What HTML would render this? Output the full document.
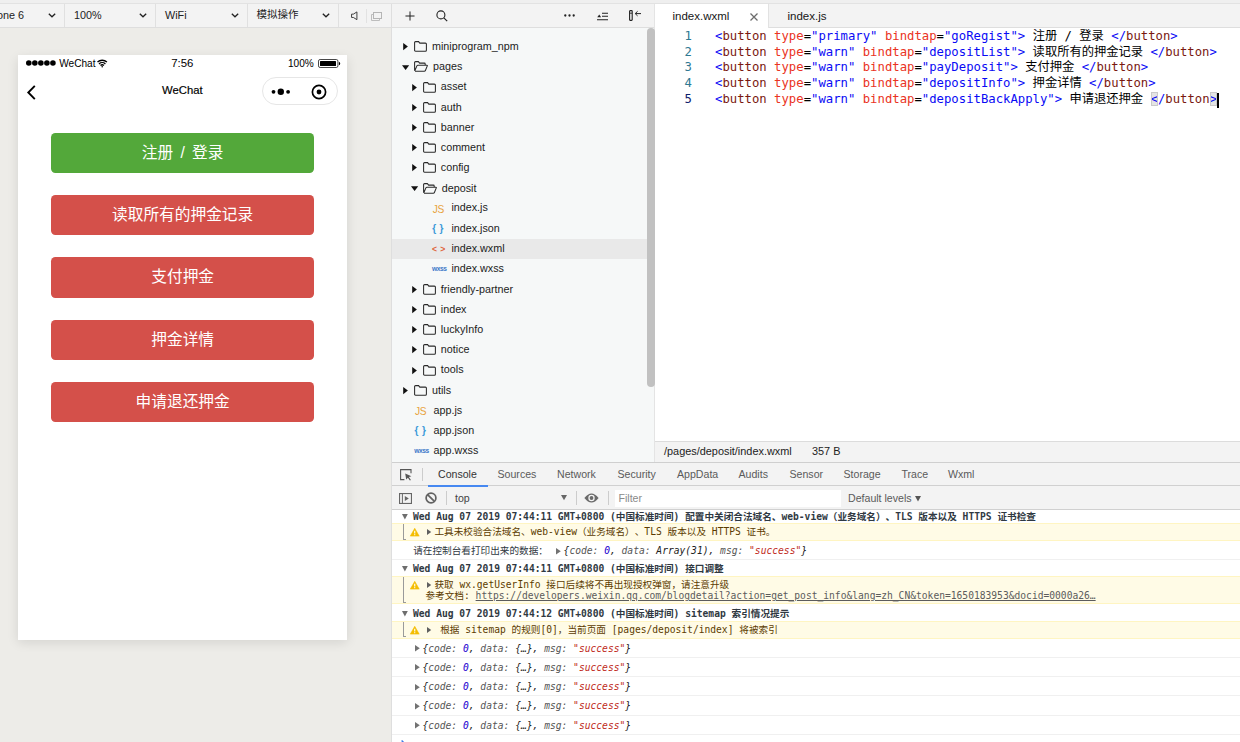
<!DOCTYPE html>
<html lang="zh-CN">
<head>
<meta charset="utf-8">
<title>WeChat DevTools</title>
<style>
*{box-sizing:border-box;margin:0;padding:0;text-spacing-trim:space-all}
html,body{width:1240px;height:742px;overflow:hidden;background:#fff}
body{position:relative;font-family:"Liberation Sans","Noto Sans CJK SC",sans-serif;font-size:10.6px;color:#333;-webkit-font-smoothing:antialiased}
.abs{position:absolute}
.t{position:absolute;white-space:nowrap;line-height:1}
svg{position:absolute;overflow:visible}
/* top strip */
#topstrip{left:0;top:0;width:1240px;height:4px;background:#efefef;border-bottom:1px solid #e2e2e2}
/* simulator */
#sim{left:0;top:4px;width:391px;height:738px;background:#edece8}
#simbar{left:0;top:0;width:391px;height:24px;background:#f3f3f3;border-bottom:1px solid #dedede}
.vsep{position:absolute;top:0;width:1px;height:23px;background:#e0e0e0}
#vline1{left:391px;top:4px;width:1px;height:738px;background:#dedede}
/* phone */
#phone{left:17.6px;top:54.5px;width:329.2px;height:585.5px;background:#fff;box-shadow:0 2.5px 11px rgba(0,0,0,.11)}
.btn{word-spacing:2.9px;position:absolute;left:33.3px;width:263.5px;height:40.4px;border-radius:4.4px;color:#fff;font-size:15.7px;line-height:40.4px;text-align:center;font-family:"Liberation Sans","Noto Sans CJK SC",sans-serif}
.btn.g{background:#53a83a}
.btn.r{background:#d4504a}
/* file tree */
#tree{left:392px;top:4px;width:263px;height:458px;background:#f6f8f8}
#treebar{left:0;top:0;width:262px;height:24px;background:#f3f3f3;border-bottom:1px solid #dedede}
.row{position:absolute;left:0;width:255px;height:20.2px}
.row .t{top:4.6px;font-size:10.6px;color:#1c1c1c}
#vline2{left:654px;top:4px;width:1px;height:458px;background:#e4e4e4;z-index:1}
/* editor */
#ed{left:655px;top:4px;width:585px;height:458px;background:#fff}
#tabs{left:0;top:0;width:585px;height:24px;background:#f3f3f3;border-bottom:1px solid #dedede}
#tab1{left:0;top:0;width:114px;height:24px;background:#fff;border-right:1px solid #e2e2e2}
.code{position:absolute;left:0;width:585px;height:15.8px;font-family:"DejaVu Sans Mono","Liberation Mono","Noto Sans CJK SC",monospace;font-size:12.28px;line-height:15.8px;white-space:pre;color:#000}
.code .n{position:absolute;left:0;width:37px;text-align:right;color:#2e7892}
.code .c{position:absolute;left:60px}
.b{color:#0a0af5}.m{color:#7a1810}.a{color:#ea3323}
.bm{background:#e4e4e4;outline:1px solid #c9c9c9;outline-offset:-1px}
.cursor{display:inline-block;width:2px;height:15px;background:#000;vertical-align:top;margin-top:0.5px}
.cj{font-family:"Noto Sans CJK SC",sans-serif;line-height:0}
#status{left:0;top:437px;width:585px;height:21px;background:#f3f3f3;border-top:1px solid #dcdcdc}
/* console */
#con{left:392px;top:462px;width:848px;height:280px;background:#fff;border-top:1px solid #cfcfcf}
#ctabs{left:0;top:0;width:848px;height:23px;background:#f3f3f3;border-bottom:1px solid #d0d0d0}
#ctool{left:0;top:23px;width:848px;height:24px;background:#f3f3f3;border-bottom:1px solid #d0d0d0}
.ct{position:absolute;top:6px;font-size:10.6px;color:#5a5a5a;line-height:1;white-space:nowrap}
.msg{position:absolute;left:0;width:848px;font-family:"DejaVu Sans Mono","Liberation Mono","Noto Sans CJK SC",monospace;font-size:9.65px;white-space:pre;color:#303942}
.msg .t{font-size:9.65px;white-space:pre}
.warn{background:#fffbe6;border-top:1px solid #fff5c2;border-bottom:1px solid #fff5c2;color:#5c3c00}
.hd{font-weight:bold;color:#303942}
.obj{font-style:italic;color:#565656;border-bottom:1px solid #f0f0f0}
.obj .k{color:#565656}.obj .num{color:#1c00cf}.obj .s{color:#c02a22}.obj .d{color:#222}
</style>
</head>
<body>
<div class="abs" id="topstrip"></div>

<!-- ============ SIMULATOR ============ -->
<div class="abs" id="sim">
  <div class="abs" id="simbar">
    <span class="t" style="left:-18.6px;top:5.8px;font-size:10.8px;color:#222">iPhone 6</span>
    <svg style="left:48px;top:9px" width="8" height="5" viewBox="0 0 8 5"><path d="M0.8 0.8 L4 3.8 L7.2 0.8" fill="none" stroke="#222" stroke-width="1.3"/></svg>
    <div class="vsep" style="left:64px"></div>
    <span class="t" style="left:74px;top:5.8px;font-size:10.8px;color:#222">100%</span>
    <svg style="left:139px;top:9px" width="8" height="5" viewBox="0 0 8 5"><path d="M0.8 0.8 L4 3.8 L7.2 0.8" fill="none" stroke="#222" stroke-width="1.3"/></svg>
    <div class="vsep" style="left:155px"></div>
    <span class="t" style="left:165px;top:5.8px;font-size:10.8px;color:#222">WiFi</span>
    <svg style="left:230.5px;top:9px" width="8" height="5" viewBox="0 0 8 5"><path d="M0.8 0.8 L4 3.8 L7.2 0.8" fill="none" stroke="#222" stroke-width="1.3"/></svg>
    <div class="vsep" style="left:247px"></div>
    <span class="t" style="left:256.5px;top:5.3px;font-size:10.5px;color:#222">模拟操作</span>
    <svg style="left:322px;top:9px" width="8" height="5" viewBox="0 0 8 5"><path d="M0.8 0.8 L4 3.8 L7.2 0.8" fill="none" stroke="#222" stroke-width="1.3"/></svg>
    <div class="vsep" style="left:338px"></div>
    <svg style="left:350.8px;top:7.2px" width="7.4" height="9.6" viewBox="0 0 8 10"><path d="M0.6 3.2 H2.6 L6.4 0.8 V9.2 L2.6 6.8 H0.6 Z" fill="none" stroke="#333" stroke-width="1"/></svg>
    <div class="abs" style="left:366px;top:5px;width:1px;height:14px;background:#e2e2e2"></div>
    <svg style="left:371px;top:8px" width="11" height="9" viewBox="0 0 11 9"><path d="M2.5 2.5 H0.5 V8.5 H8.5 V6.5" fill="none" stroke="#bdbdbd" stroke-width="1"/><rect x="2.5" y="0.5" width="8" height="6" fill="none" stroke="#b5b5b5" stroke-width="1"/></svg>
  </div>
</div>
<div class="abs" id="vline1"></div>

<!-- phone -->
<div class="abs" id="phone">
  <!-- status bar -->
  <svg style="left:8.7px;top:5.4px" width="30" height="6" viewBox="0 0 30 6"><g fill="#000"><circle cx="2.8" cy="3" r="2.8"/><circle cx="8.83" cy="3" r="2.8"/><circle cx="14.86" cy="3" r="2.8"/><circle cx="20.89" cy="3" r="2.8"/><circle cx="26.92" cy="3" r="2.8"/></g></svg>
  <span class="t" style="left:41.6px;top:4.7px;font-size:10.1px;color:#000">WeChat</span>
  <svg style="left:79.2px;top:4.3px" width="10.4" height="8.6" viewBox="0 0 10.4 8.6"><g fill="none" stroke="#000" stroke-width="1.35"><path d="M0.5 3.1 A6.8 6.8 0 0 1 9.9 3.1"/><path d="M2.0 4.9 A4.6 4.6 0 0 1 8.4 4.9"/><path d="M3.5 6.6 A2.5 2.5 0 0 1 6.9 6.6"/></g><circle cx="5.2" cy="7.7" r="0.8" fill="#000"/></svg>
  <span class="t" style="left:153.6px;top:3.7px;font-size:11.4px;color:#000">7:56</span>
  <span class="t" style="left:270.4px;top:4.7px;font-size:10.1px;color:#000">100%</span>
  <svg style="left:300.2px;top:4.3px" width="23" height="9" viewBox="0 0 23 9"><rect x="0.5" y="0.5" width="19.4" height="8" rx="1.6" fill="none" stroke="#333" stroke-width="0.9"/><rect x="2" y="2" width="16" height="5" rx="0.5" fill="#000"/><path d="M20.9 2.7 A1.9 1.9 0 0 1 20.9 6.3 Z" fill="#000"/></svg>
  <!-- nav bar -->
  <svg style="left:9px;top:30.2px" width="9" height="15" viewBox="0 0 9 15"><path d="M7.8 0.9 L1.3 7.5 L7.8 14.1" fill="none" stroke="#000" stroke-width="1.9"/></svg>
  <span class="t" style="left:144.4px;top:30.6px;font-size:11.3px;color:#000;-webkit-text-stroke:0.18px #000">WeChat</span>
  <div class="abs" style="left:244.4px;top:22.6px;width:75.7px;height:28.4px;border:1px solid #e6e6e6;border-radius:15px;background:#fff"></div>
  <svg style="left:252.6px;top:32.5px" width="22" height="8" viewBox="0 0 22 8"><g fill="#000"><circle cx="3.5" cy="4.8" r="1.9"/><circle cx="10.8" cy="4.8" r="3.2"/><circle cx="18.1" cy="4.8" r="1.9"/></g></svg>
  <svg style="left:293.4px;top:29.2px" width="16" height="16" viewBox="0 0 16 16"><circle cx="8" cy="8" r="6.6" fill="none" stroke="#000" stroke-width="1.7"/><circle cx="8" cy="8" r="2.4" fill="#000"/></svg>
  <!-- buttons -->
  <div class="btn g" style="top:78.1px">注册 / 登录</div>
  <div class="btn r" style="top:140.45px">读取所有的押金记录</div>
  <div class="btn r" style="top:202.8px">支付押金</div>
  <div class="btn r" style="top:265.15px">押金详情</div>
  <div class="btn r" style="top:327.5px">申请退还押金</div>
</div>

<!-- ============ FILE TREE ============ -->
<div class="abs" id="tree">
  <div class="abs" id="treebar"></div>
  <!--TREE-->
<svg style="left:12.6px;top:6.9px" width="10" height="10" viewBox="0 0 11 11"><path d="M5.5 0.5 V10.5 M0.5 5.5 H10.5" stroke="#222" stroke-width="1.1" fill="none"/></svg>
<svg style="left:44px;top:6px" width="12" height="12" viewBox="0 0 12 12"><circle cx="4.9" cy="4.9" r="4" fill="none" stroke="#222" stroke-width="1.1"/><path d="M7.8 7.8 L11.2 11.2" stroke="#222" stroke-width="1.2"/></svg>
<svg style="left:172.3px;top:9.8px" width="11" height="3" viewBox="0 0 11 3"><g fill="#222"><circle cx="1.3" cy="1.5" r="1.15"/><circle cx="5.5" cy="1.5" r="1.15"/><circle cx="9.7" cy="1.5" r="1.15"/></g></svg>
<svg style="left:205px;top:7.5px" width="11" height="9" viewBox="0 0 11 9"><path d="M5 1.2 H11 M5 4.2 H11 M0 7.8 H11" stroke="#222" stroke-width="1.1" fill="none"/><path d="M0.3 5.2 L2.2 2.6 L4.1 5.2 Z" fill="#222"/></svg>
<svg style="left:237px;top:5.6px" width="13" height="11" viewBox="0 0 13 11"><rect x="0.6" y="0.6" width="2.6" height="9.8" rx="0.6" fill="none" stroke="#222" stroke-width="1.1"/><path d="M0.6 3.2 H3.2" stroke="#222" stroke-width="0.9"/><path d="M12 3.6 H6.4 M8.6 1.3 L6.2 3.6 L8.6 5.9" stroke="#222" stroke-width="1" fill="none"/></svg>
<div class="row" style="top:32.65px"><svg style="left:11.00px;top:6.51px" width="5" height="7.2" viewBox="0 0 5 7.2"><path d="M0.2 0 L4.9 3.6 L0.2 7.2 Z" fill="#111"/></svg><svg style="left:22.30px;top:4.51px" width="13" height="11" viewBox="0 0 13 11"><path d="M0.6 9.2 V1.6 Q0.6 0.6 1.6 0.6 H4.6 L5.8 2.1 H11.4 Q12.4 2.1 12.4 3.1 V9.2 Q12.4 10.2 11.4 10.2 H1.6 Q0.6 10.2 0.6 9.2 Z" fill="none" stroke="#2a2a2a" stroke-width="1.05"/></svg><span class="t" style="left:40.0px;top:4.39px;font-size:10.75px">miniprogram_npm</span></div>
<div class="row" style="top:52.86px"><svg style="left:9.90px;top:7.81px" width="7.2" height="5" viewBox="0 0 7.2 5"><path d="M0 0.2 L7.2 0.2 L3.6 4.9 Z" fill="#111"/></svg><svg style="left:22.30px;top:4.51px" width="14" height="11" viewBox="0 0 14 11"><path d="M0.6 9.6 V1.6 Q0.6 0.6 1.6 0.6 H4.4 L5.6 2.1 H10.4 Q11.2 2.1 11.2 3 V4.2 M0.7 10 L2.9 4.9 Q3.2 4.2 4 4.2 H13 Q13.6 4.2 13.3 4.9 L11.4 9.5 Q11.1 10.2 10.3 10.2 H1 " fill="none" stroke="#2a2a2a" stroke-width="1.05" stroke-linejoin="round"/></svg><span class="t" style="left:41.0px;top:4.39px;font-size:10.75px">pages</span></div>
<div class="row" style="top:73.08px"><svg style="left:19.80px;top:6.51px" width="5" height="7.2" viewBox="0 0 5 7.2"><path d="M0.2 0 L4.9 3.6 L0.2 7.2 Z" fill="#111"/></svg><svg style="left:31.20px;top:4.51px" width="13" height="11" viewBox="0 0 13 11"><path d="M0.6 9.2 V1.6 Q0.6 0.6 1.6 0.6 H4.6 L5.8 2.1 H11.4 Q12.4 2.1 12.4 3.1 V9.2 Q12.4 10.2 11.4 10.2 H1.6 Q0.6 10.2 0.6 9.2 Z" fill="none" stroke="#2a2a2a" stroke-width="1.05"/></svg><span class="t" style="left:48.8px;top:4.39px;font-size:10.75px">asset</span></div>
<div class="row" style="top:93.29px"><svg style="left:19.80px;top:6.51px" width="5" height="7.2" viewBox="0 0 5 7.2"><path d="M0.2 0 L4.9 3.6 L0.2 7.2 Z" fill="#111"/></svg><svg style="left:31.20px;top:4.51px" width="13" height="11" viewBox="0 0 13 11"><path d="M0.6 9.2 V1.6 Q0.6 0.6 1.6 0.6 H4.6 L5.8 2.1 H11.4 Q12.4 2.1 12.4 3.1 V9.2 Q12.4 10.2 11.4 10.2 H1.6 Q0.6 10.2 0.6 9.2 Z" fill="none" stroke="#2a2a2a" stroke-width="1.05"/></svg><span class="t" style="left:48.8px;top:4.39px;font-size:10.75px">auth</span></div>
<div class="row" style="top:113.51px"><svg style="left:19.80px;top:6.51px" width="5" height="7.2" viewBox="0 0 5 7.2"><path d="M0.2 0 L4.9 3.6 L0.2 7.2 Z" fill="#111"/></svg><svg style="left:31.20px;top:4.51px" width="13" height="11" viewBox="0 0 13 11"><path d="M0.6 9.2 V1.6 Q0.6 0.6 1.6 0.6 H4.6 L5.8 2.1 H11.4 Q12.4 2.1 12.4 3.1 V9.2 Q12.4 10.2 11.4 10.2 H1.6 Q0.6 10.2 0.6 9.2 Z" fill="none" stroke="#2a2a2a" stroke-width="1.05"/></svg><span class="t" style="left:48.8px;top:4.39px;font-size:10.75px">banner</span></div>
<div class="row" style="top:133.72px"><svg style="left:19.80px;top:6.51px" width="5" height="7.2" viewBox="0 0 5 7.2"><path d="M0.2 0 L4.9 3.6 L0.2 7.2 Z" fill="#111"/></svg><svg style="left:31.20px;top:4.51px" width="13" height="11" viewBox="0 0 13 11"><path d="M0.6 9.2 V1.6 Q0.6 0.6 1.6 0.6 H4.6 L5.8 2.1 H11.4 Q12.4 2.1 12.4 3.1 V9.2 Q12.4 10.2 11.4 10.2 H1.6 Q0.6 10.2 0.6 9.2 Z" fill="none" stroke="#2a2a2a" stroke-width="1.05"/></svg><span class="t" style="left:48.8px;top:4.39px;font-size:10.75px">comment</span></div>
<div class="row" style="top:153.94px"><svg style="left:19.80px;top:6.51px" width="5" height="7.2" viewBox="0 0 5 7.2"><path d="M0.2 0 L4.9 3.6 L0.2 7.2 Z" fill="#111"/></svg><svg style="left:31.20px;top:4.51px" width="13" height="11" viewBox="0 0 13 11"><path d="M0.6 9.2 V1.6 Q0.6 0.6 1.6 0.6 H4.6 L5.8 2.1 H11.4 Q12.4 2.1 12.4 3.1 V9.2 Q12.4 10.2 11.4 10.2 H1.6 Q0.6 10.2 0.6 9.2 Z" fill="none" stroke="#2a2a2a" stroke-width="1.05"/></svg><span class="t" style="left:48.8px;top:4.39px;font-size:10.75px">config</span></div>
<div class="row" style="top:174.16px"><svg style="left:18.70px;top:7.81px" width="7.2" height="5" viewBox="0 0 7.2 5"><path d="M0 0.2 L7.2 0.2 L3.6 4.9 Z" fill="#111"/></svg><svg style="left:31.20px;top:4.51px" width="14" height="11" viewBox="0 0 14 11"><path d="M0.6 9.6 V1.6 Q0.6 0.6 1.6 0.6 H4.4 L5.6 2.1 H10.4 Q11.2 2.1 11.2 3 V4.2 M0.7 10 L2.9 4.9 Q3.2 4.2 4 4.2 H13 Q13.6 4.2 13.3 4.9 L11.4 9.5 Q11.1 10.2 10.3 10.2 H1 " fill="none" stroke="#2a2a2a" stroke-width="1.05" stroke-linejoin="round"/></svg><span class="t" style="left:49.8px;top:4.39px;font-size:10.75px">deposit</span></div>
<div class="row" style="top:194.37px"><span class="t" style="left:40.70px;top:6.21px;font-size:10.2px;color:#e8a33d;font-family:'Liberation Sans',sans-serif;letter-spacing:-0.4px">JS</span><span class="t" style="left:59.4px;top:4.09px;font-size:10.75px">index.js</span></div>
<div class="row" style="top:214.59px"><span class="t" style="left:40.30px;top:5.31px;font-size:10px;color:#3b9ad9;font-family:'Liberation Sans',sans-serif;font-weight:bold;letter-spacing:3.4px">{}</span><span class="t" style="left:59.4px;top:4.09px;font-size:10.75px">index.json</span></div>
<div class="row" style="top:234.80px;background:#e9e9e9"><span class="t" style="left:40.00px;top:6.11px;font-size:8.6px;color:#e0643a;font-family:'Liberation Sans',sans-serif;font-weight:bold;letter-spacing:3.2px">&lt;&gt;</span><span class="t" style="left:59.4px;top:4.09px;font-size:10.75px">index.wxml</span></div>
<div class="row" style="top:255.02px"><span class="t" style="left:40.00px;top:6.81px;font-size:6.7px;color:#3f78c9;font-family:'Liberation Sans',sans-serif;font-weight:bold;letter-spacing:-0.45px">wxss</span><span class="t" style="left:59.4px;top:4.09px;font-size:10.75px">index.wxss</span></div>
<div class="row" style="top:275.23px"><svg style="left:19.80px;top:6.51px" width="5" height="7.2" viewBox="0 0 5 7.2"><path d="M0.2 0 L4.9 3.6 L0.2 7.2 Z" fill="#111"/></svg><svg style="left:31.20px;top:4.51px" width="13" height="11" viewBox="0 0 13 11"><path d="M0.6 9.2 V1.6 Q0.6 0.6 1.6 0.6 H4.6 L5.8 2.1 H11.4 Q12.4 2.1 12.4 3.1 V9.2 Q12.4 10.2 11.4 10.2 H1.6 Q0.6 10.2 0.6 9.2 Z" fill="none" stroke="#2a2a2a" stroke-width="1.05"/></svg><span class="t" style="left:48.8px;top:4.39px;font-size:10.75px">friendly-partner</span></div>
<div class="row" style="top:295.44px"><svg style="left:19.80px;top:6.51px" width="5" height="7.2" viewBox="0 0 5 7.2"><path d="M0.2 0 L4.9 3.6 L0.2 7.2 Z" fill="#111"/></svg><svg style="left:31.20px;top:4.51px" width="13" height="11" viewBox="0 0 13 11"><path d="M0.6 9.2 V1.6 Q0.6 0.6 1.6 0.6 H4.6 L5.8 2.1 H11.4 Q12.4 2.1 12.4 3.1 V9.2 Q12.4 10.2 11.4 10.2 H1.6 Q0.6 10.2 0.6 9.2 Z" fill="none" stroke="#2a2a2a" stroke-width="1.05"/></svg><span class="t" style="left:48.8px;top:4.39px;font-size:10.75px">index</span></div>
<div class="row" style="top:315.66px"><svg style="left:19.80px;top:6.51px" width="5" height="7.2" viewBox="0 0 5 7.2"><path d="M0.2 0 L4.9 3.6 L0.2 7.2 Z" fill="#111"/></svg><svg style="left:31.20px;top:4.51px" width="13" height="11" viewBox="0 0 13 11"><path d="M0.6 9.2 V1.6 Q0.6 0.6 1.6 0.6 H4.6 L5.8 2.1 H11.4 Q12.4 2.1 12.4 3.1 V9.2 Q12.4 10.2 11.4 10.2 H1.6 Q0.6 10.2 0.6 9.2 Z" fill="none" stroke="#2a2a2a" stroke-width="1.05"/></svg><span class="t" style="left:48.8px;top:4.39px;font-size:10.75px">luckyInfo</span></div>
<div class="row" style="top:335.88px"><svg style="left:19.80px;top:6.51px" width="5" height="7.2" viewBox="0 0 5 7.2"><path d="M0.2 0 L4.9 3.6 L0.2 7.2 Z" fill="#111"/></svg><svg style="left:31.20px;top:4.51px" width="13" height="11" viewBox="0 0 13 11"><path d="M0.6 9.2 V1.6 Q0.6 0.6 1.6 0.6 H4.6 L5.8 2.1 H11.4 Q12.4 2.1 12.4 3.1 V9.2 Q12.4 10.2 11.4 10.2 H1.6 Q0.6 10.2 0.6 9.2 Z" fill="none" stroke="#2a2a2a" stroke-width="1.05"/></svg><span class="t" style="left:48.8px;top:4.39px;font-size:10.75px">notice</span></div>
<div class="row" style="top:356.09px"><svg style="left:19.80px;top:6.51px" width="5" height="7.2" viewBox="0 0 5 7.2"><path d="M0.2 0 L4.9 3.6 L0.2 7.2 Z" fill="#111"/></svg><svg style="left:31.20px;top:4.51px" width="13" height="11" viewBox="0 0 13 11"><path d="M0.6 9.2 V1.6 Q0.6 0.6 1.6 0.6 H4.6 L5.8 2.1 H11.4 Q12.4 2.1 12.4 3.1 V9.2 Q12.4 10.2 11.4 10.2 H1.6 Q0.6 10.2 0.6 9.2 Z" fill="none" stroke="#2a2a2a" stroke-width="1.05"/></svg><span class="t" style="left:48.8px;top:4.39px;font-size:10.75px">tools</span></div>
<div class="row" style="top:376.30px"><svg style="left:11.00px;top:6.51px" width="5" height="7.2" viewBox="0 0 5 7.2"><path d="M0.2 0 L4.9 3.6 L0.2 7.2 Z" fill="#111"/></svg><svg style="left:22.30px;top:4.51px" width="13" height="11" viewBox="0 0 13 11"><path d="M0.6 9.2 V1.6 Q0.6 0.6 1.6 0.6 H4.6 L5.8 2.1 H11.4 Q12.4 2.1 12.4 3.1 V9.2 Q12.4 10.2 11.4 10.2 H1.6 Q0.6 10.2 0.6 9.2 Z" fill="none" stroke="#2a2a2a" stroke-width="1.05"/></svg><span class="t" style="left:40.0px;top:4.39px;font-size:10.75px">utils</span></div>
<div class="row" style="top:396.52px"><span class="t" style="left:23.00px;top:6.21px;font-size:10.2px;color:#e8a33d;font-family:'Liberation Sans',sans-serif;letter-spacing:-0.4px">JS</span><span class="t" style="left:41.5px;top:4.09px;font-size:10.75px">app.js</span></div>
<div class="row" style="top:416.73px"><span class="t" style="left:22.60px;top:5.31px;font-size:10px;color:#3b9ad9;font-family:'Liberation Sans',sans-serif;font-weight:bold;letter-spacing:3.4px">{}</span><span class="t" style="left:41.5px;top:4.09px;font-size:10.75px">app.json</span></div>
<div class="row" style="top:436.95px"><span class="t" style="left:22.30px;top:6.81px;font-size:6.7px;color:#3f78c9;font-family:'Liberation Sans',sans-serif;font-weight:bold;letter-spacing:-0.45px">wxss</span><span class="t" style="left:41.5px;top:4.09px;font-size:10.75px">app.wxss</span></div>
<div class="abs" style="left:255px;top:23.7px;width:7.9px;height:359.5px;background:#c1c1c1;border-radius:4px;z-index:3"></div>
<!--/TREE-->
</div>
<div class="abs" id="vline2"></div>

<!-- ============ EDITOR ============ -->
<div class="abs" id="ed">
  <div class="abs" id="tabs">
    <div class="abs" id="tab1"></div>
    <span class="t" style="left:17.5px;top:6.8px;font-size:11.5px;color:#161616">index.wxml</span>
    <svg style="left:95px;top:8.5px" width="8" height="8" viewBox="0 0 8 8"><path d="M0.5 0.5 L7.5 7.5 M7.5 0.5 L0.5 7.5" stroke="#6c6c6c" stroke-width="1.25" fill="none"/></svg>
    <span class="t" style="left:132.5px;top:6.8px;font-size:11.5px;color:#161616">index.js</span>
  </div>
  <!--CODE-->
<div class="code" style="top:24.70px"><span class="n">1</span><span class="c"><span class="b">&lt;</span><span class="m">button</span> <span class="a">type</span>=<span class="b">"primary"</span> <span class="a">bindtap</span>=<span class="b">"goRegist"</span><span class="b">&gt;</span> <span class="cj">注册</span> / <span class="cj">登录</span> <span class="b">&lt;/</span><span class="m">button</span><span class="b">&gt;</span></span></div>
<div class="code" style="top:40.55px"><span class="n">2</span><span class="c"><span class="b">&lt;</span><span class="m">button</span> <span class="a">type</span>=<span class="b">"warn"</span> <span class="a">bindtap</span>=<span class="b">"depositList"</span><span class="b">&gt;</span> <span class="cj">读取所有的押金记录</span> <span class="b">&lt;/</span><span class="m">button</span><span class="b">&gt;</span></span></div>
<div class="code" style="top:56.40px"><span class="n">3</span><span class="c"><span class="b">&lt;</span><span class="m">button</span> <span class="a">type</span>=<span class="b">"warn"</span> <span class="a">bindtap</span>=<span class="b">"payDeposit"</span><span class="b">&gt;</span> <span class="cj">支付押金</span> <span class="b">&lt;/</span><span class="m">button</span><span class="b">&gt;</span></span></div>
<div class="code" style="top:72.25px"><span class="n">4</span><span class="c"><span class="b">&lt;</span><span class="m">button</span> <span class="a">type</span>=<span class="b">"warn"</span> <span class="a">bindtap</span>=<span class="b">"depositInfo"</span><span class="b">&gt;</span> <span class="cj">押金详情</span> <span class="b">&lt;/</span><span class="m">button</span><span class="b">&gt;</span></span></div>
<div class="code" style="top:88.10px"><span class="n" style="color:#0e216b">5</span><span class="c"><span class="b">&lt;</span><span class="m">button</span> <span class="a">type</span>=<span class="b">"warn"</span> <span class="a">bindtap</span>=<span class="b">"depositBackApply"</span><span class="b">&gt;</span> <span class="cj">申请退还押金</span> <span class="b bm">&lt;</span><span class="b">/</span><span class="m">button</span><span class="b bm">&gt;</span><span class="cursor"></span></span></div>
<!--/CODE-->
  <div class="abs" id="status">
    <span class="t" style="left:9px;top:3.5px;font-size:10.9px;color:#222">/pages/deposit/index.wxml</span>
    <span class="t" style="left:157px;top:3.5px;font-size:10.9px;color:#222">357 B</span>
  </div>
</div>

<!-- ============ CONSOLE ============ -->
<div class="abs" id="con">
  <div class="abs" id="ctabs"></div>
  <div class="abs" id="ctool"></div>
  <!--MSGS-->
<span class="ct" style="left:46.0px;top:6.3px;color:#333">Console</span>
<span class="ct" style="left:105.5px;top:6.3px;color:#5a5a5a">Sources</span>
<span class="ct" style="left:165.0px;top:6.3px;color:#5a5a5a">Network</span>
<span class="ct" style="left:225.5px;top:6.3px;color:#5a5a5a">Security</span>
<span class="ct" style="left:285.0px;top:6.3px;color:#5a5a5a">AppData</span>
<span class="ct" style="left:346.5px;top:6.3px;color:#5a5a5a">Audits</span>
<span class="ct" style="left:397.5px;top:6.3px;color:#5a5a5a">Sensor</span>
<span class="ct" style="left:451.5px;top:6.3px;color:#5a5a5a">Storage</span>
<span class="ct" style="left:509.5px;top:6.3px;color:#5a5a5a">Trace</span>
<span class="ct" style="left:556.0px;top:6.3px;color:#5a5a5a">Wxml</span>
<div class="abs" style="left:36.0px;top:22px;width:60px;height:2px;background:#4688f1"></div>
<svg style="left:7.6px;top:6.3px" width="12" height="12" viewBox="0 0 12 12"><path d="M11 4.2 V0.6 H0.6 V10.6 H4.4" fill="none" stroke="#555" stroke-width="1.1"/><path d="M5.2 4.6 L11.4 7.2 L8.9 8.1 L10.9 10.9 L9.9 11.6 L7.9 8.8 L6.2 10.6 Z" fill="#555"/></svg>
<div class="abs" style="left:30.0px;top:5px;width:1px;height:13px;background:#ccc"></div>
<svg style="left:7.0px;top:29.5px" width="13" height="11" viewBox="0 0 13 11"><rect x="0.55" y="0.55" width="11.9" height="9.9" fill="none" stroke="#666" stroke-width="1.1"/><path d="M3.4 0.5 V10.5" stroke="#666" stroke-width="1"/><path d="M5.8 3 L9.8 5.5 L5.8 8 Z" fill="#666"/></svg>
<svg style="left:32.6px;top:29px" width="12" height="12" viewBox="0 0 12 12"><circle cx="6" cy="6" r="4.9" fill="none" stroke="#626262" stroke-width="1.7"/><path d="M2.6 2.6 L9.4 9.4" stroke="#626262" stroke-width="1.7"/></svg>
<div class="abs" style="left:54.0px;top:28px;width:1px;height:14px;background:#ccc"></div>
<span class="ct" style="left:63.0px;top:29.5px;color:#444">top</span>
<svg style="left:169.2px;top:32.3px" width="6" height="5.2" viewBox="0 0 7 6"><path d="M0 0 H7 L3.5 6 Z" fill="#666"/></svg>
<div class="abs" style="left:183.5px;top:28px;width:1px;height:14px;background:#ccc"></div>
<svg style="left:192.0px;top:30px" width="15" height="10" viewBox="0 0 15 10"><path d="M0.4 5 Q7.5 -4.2 14.6 5 Q7.5 14.2 0.4 5 Z" fill="#6a6a6a"/><circle cx="7.5" cy="5" r="3.2" fill="#f3f3f3"/><circle cx="7.5" cy="5" r="1.9" fill="#6a6a6a"/></svg>
<div class="abs" style="left:215.5px;top:28px;width:1px;height:14px;background:#ccc"></div>
<div class="abs" style="left:222.6px;top:26.5px;width:226.4px;height:17.5px;background:#fff"></div>
<span class="ct" style="left:226.5px;top:29.8px;color:#8a8a8a">Filter</span>
<span class="ct" style="left:456.0px;top:29.5px;color:#5a5a5a">Default levels</span>
<svg style="left:523.0px;top:32.5px" width="6" height="5.5" viewBox="0 0 6 5.5"><path d="M0 0 H6 L3 5.5 Z" fill="#555"/></svg>
<div class="msg hd" style="top:46.5px;height:13.5px"><svg style="left:9.6px;top:4.3px" width="5.8" height="5.4" viewBox="0 0 5.8 5.4"><path d="M0 0 H5.8 L2.9 5.4 Z" fill="#6e6e6e"/></svg><span class="t" style="left:21.0px;top:2.2px;">Wed Aug 07 2019 07:44:11 GMT+0800 (中国标准时间) 配置中关闭合法域名、web-view（业务域名）、TLS 版本以及 HTTPS 证书检查</span></div>
<div class="msg warn" style="top:60.0px;height:18.0px"><div class="abs" style="left:10.5px;top:0;width:3px;height:15.5px;border-left:1px solid #9a9a9a;border-bottom:1px solid #9a9a9a"></div><svg style="left:17.7px;top:4.0px" width="9.5" height="8.4" viewBox="0 0 10 9"><path d="M5 0.3 L9.8 8.7 H0.2 Z" fill="#f4bd00" stroke="#f4bd00" stroke-width="0.6" stroke-linejoin="round"/><path d="M5 3 V5.8" stroke="#fff" stroke-width="1.2"/><circle cx="5" cy="7.2" r="0.65" fill="#fff"/></svg><svg style="left:34.8px;top:5.4px" width="4.2" height="6" viewBox="0 0 4.2 6"><path d="M0 0 L4.2 3.0 L0 6 Z" fill="#5f5f5f"/></svg><span class="t" style="left:42.4px;top:2.6px;">工具未校验合法域名、web-view（业务域名）、TLS 版本以及 HTTPS 证书。</span></div>
<div class="msg obj" style="top:78.0px;height:19.0px"><span class="t" style="left:21.2px;top:4.8px;font-style:normal;color:#303942">请在控制台看打印出来的数据：</span><svg style="left:163.6px;top:6.8px" width="4.8" height="6.6" viewBox="0 0 4.8 6.6"><path d="M0 0 L4.8 3.3 L0 6.6 Z" fill="#727272"/></svg><span class="t" style="left:171.6px;top:5.3px;"><span class="d">{</span><span class="k">code: </span><span class="num">0</span><span class="d">, </span><span class="k">data: </span><span class="d">Array(31), </span><span class="k">msg: </span><span class="s">"success"</span><span class="d">}</span></span></div>
<div class="msg hd" style="top:97.0px;height:16.0px"><svg style="left:9.6px;top:5.8px" width="5.8" height="5.4" viewBox="0 0 5.8 5.4"><path d="M0 0 H5.8 L2.9 5.4 Z" fill="#6e6e6e"/></svg><span class="t" style="left:21.0px;top:3.7px;">Wed Aug 07 2019 07:44:11 GMT+0800 (中国标准时间) 接口调整</span></div>
<div class="msg warn" style="top:113.0px;height:28.0px"><div class="abs" style="left:10.5px;top:0;width:3px;height:25.5px;border-left:1px solid #9a9a9a;border-bottom:1px solid #9a9a9a"></div><svg style="left:17.7px;top:4.0px" width="9.5" height="8.4" viewBox="0 0 10 9"><path d="M5 0.3 L9.8 8.7 H0.2 Z" fill="#f4bd00" stroke="#f4bd00" stroke-width="0.6" stroke-linejoin="round"/><path d="M5 3 V5.8" stroke="#fff" stroke-width="1.2"/><circle cx="5" cy="7.2" r="0.65" fill="#fff"/></svg><svg style="left:34.8px;top:5.4px" width="4.2" height="6" viewBox="0 0 4.2 6"><path d="M0 0 L4.2 3.0 L0 6 Z" fill="#5f5f5f"/></svg><span class="t" style="left:42.4px;top:2.6px;">获取 wx.getUserInfo 接口后续将不再出现授权弹窗，请注意升级</span><span class="t" style="left:33.5px;top:14.3px;">参考文档: <span style="text-decoration:underline;color:#5c5c5c">https://developers.weixin.qq.com/blogdetail?action=get_post_info&amp;lang=zh_CN&amp;token=1650183953&amp;docid=0000a26…</span></span></div>
<div class="msg hd" style="top:141.0px;height:17.0px"><svg style="left:9.6px;top:6.8px" width="5.8" height="5.4" viewBox="0 0 5.8 5.4"><path d="M0 0 H5.8 L2.9 5.4 Z" fill="#6e6e6e"/></svg><span class="t" style="left:21.0px;top:4.7px;">Wed Aug 07 2019 07:44:12 GMT+0800 (中国标准时间) sitemap 索引情况提示</span></div>
<div class="msg warn" style="top:158.0px;height:17.5px"><div class="abs" style="left:10.5px;top:0;width:3px;height:15.0px;border-left:1px solid #9a9a9a;border-bottom:1px solid #9a9a9a"></div><svg style="left:17.7px;top:3.9px" width="9.5" height="8.4" viewBox="0 0 10 9"><path d="M5 0.3 L9.8 8.7 H0.2 Z" fill="#f4bd00" stroke="#f4bd00" stroke-width="0.6" stroke-linejoin="round"/><path d="M5 3 V5.8" stroke="#fff" stroke-width="1.2"/><circle cx="5" cy="7.2" r="0.65" fill="#fff"/></svg><svg style="left:34.8px;top:5.3px" width="4.2" height="6" viewBox="0 0 4.2 6"><path d="M0 0 L4.2 3.0 L0 6 Z" fill="#5f5f5f"/></svg><span class="t" style="left:42.4px;top:2.5px;"> 根据 sitemap 的规则[0]，当前页面 [pages/deposit/index] 将被索引</span></div>
<div class="msg obj" style="top:175.5px;height:19.3px"><svg style="left:22.5px;top:6.4px" width="4.8" height="6.6" viewBox="0 0 4.8 6.6"><path d="M0 0 L4.8 3.3 L0 6.6 Z" fill="#727272"/></svg><span class="t" style="left:30.4px;top:5.0px;"><span class="d">{</span><span class="k">code: </span><span class="num">0</span><span class="d">, </span><span class="k">data: </span><span class="d">{…}, </span><span class="k">msg: </span><span class="s">"success"</span><span class="d">}</span></span></div>
<div class="msg obj" style="top:194.8px;height:19.2px"><svg style="left:22.5px;top:6.4px" width="4.8" height="6.6" viewBox="0 0 4.8 6.6"><path d="M0 0 L4.8 3.3 L0 6.6 Z" fill="#727272"/></svg><span class="t" style="left:30.4px;top:4.9px;"><span class="d">{</span><span class="k">code: </span><span class="num">0</span><span class="d">, </span><span class="k">data: </span><span class="d">{…}, </span><span class="k">msg: </span><span class="s">"success"</span><span class="d">}</span></span></div>
<div class="msg obj" style="top:214.0px;height:19.4px"><svg style="left:22.5px;top:6.5px" width="4.8" height="6.6" viewBox="0 0 4.8 6.6"><path d="M0 0 L4.8 3.3 L0 6.6 Z" fill="#727272"/></svg><span class="t" style="left:30.4px;top:5.0px;"><span class="d">{</span><span class="k">code: </span><span class="num">0</span><span class="d">, </span><span class="k">data: </span><span class="d">{…}, </span><span class="k">msg: </span><span class="s">"success"</span><span class="d">}</span></span></div>
<div class="msg obj" style="top:233.4px;height:19.3px"><svg style="left:22.5px;top:6.4px" width="4.8" height="6.6" viewBox="0 0 4.8 6.6"><path d="M0 0 L4.8 3.3 L0 6.6 Z" fill="#727272"/></svg><span class="t" style="left:30.4px;top:5.0px;"><span class="d">{</span><span class="k">code: </span><span class="num">0</span><span class="d">, </span><span class="k">data: </span><span class="d">{…}, </span><span class="k">msg: </span><span class="s">"success"</span><span class="d">}</span></span></div>
<div class="msg obj" style="top:252.7px;height:19.3px"><svg style="left:22.5px;top:6.4px" width="4.8" height="6.6" viewBox="0 0 4.8 6.6"><path d="M0 0 L4.8 3.3 L0 6.6 Z" fill="#727272"/></svg><span class="t" style="left:30.4px;top:5.0px;"><span class="d">{</span><span class="k">code: </span><span class="num">0</span><span class="d">, </span><span class="k">data: </span><span class="d">{…}, </span><span class="k">msg: </span><span class="s">"success"</span><span class="d">}</span></span></div>
<svg style="left:9.0px;top:276.8px" width="5" height="8" viewBox="0 0 5 8"><path d="M0.6 0.6 L4.2 4 L0.6 7.4" fill="none" stroke="#3b78e7" stroke-width="1.4"/></svg>
<!--/MSGS-->
</div>
</body>
</html>
